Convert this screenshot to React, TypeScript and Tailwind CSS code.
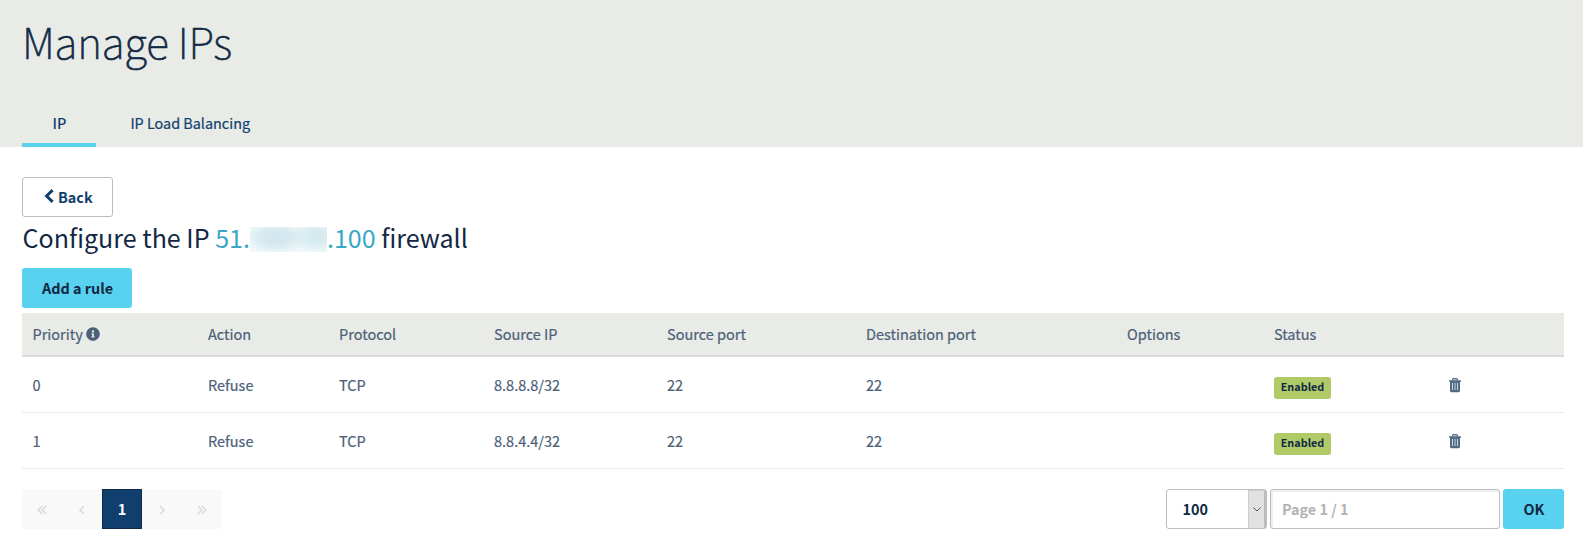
import { FaInfoCircle } from "react-icons/fa";

const columns = "grid grid-cols-[176px_131px_155px_173px_199px_261px_147px_175px_125px] items-center";

const headers = ["Action", "Protocol", "Source IP", "Source port", "Destination port", "Options", "Status"];

const rules = [
  { priority: 0, action: "Refuse", protocol: "TCP", source: "8.8.8.8/32", sourcePort: 22, destinationPort: 22 },
  { priority: 1, action: "Refuse", protocol: "TCP", source: "8.8.4.4/32", sourcePort: 22, destinationPort: 22 },
];

function Trash() {
  return (
    <svg className="mt-[2px] h-[15px] w-[12px]" viewBox="0 0 12 15" fill="none">
      <path d="M3.6 2.4V1.6Q3.6 .7 4.5 .7H7.5Q8.4 .7 8.4 1.6V2.4" stroke="#5f7389" strokeWidth="1.4" />
      <path d="M0 2.2H12V3.8H11V12.8Q11 14.2 9.8 14.2H2.2Q1 14.2 1 12.8V3.8H0Z" fill="#536b85" />
      <path d="M3.5 5V12M6 5V12M8.5 5V12" stroke="#c8d5e4" strokeWidth="1" />
    </svg>
  );
}

function Chevrons({ double = false, flip = false }: { double?: boolean; flip?: boolean }) {
  return (
    <span className="flex h-10 w-10 items-center justify-center pt-[2px]">
      <svg className={flip ? "h-[10px] w-[10px] -scale-x-100" : "h-[10px] w-[10px]"} viewBox="0 0 10 10" fill="none" stroke="#d9dadd" strokeWidth="1.6">
        {double ? <path d="M5.2 1L1.2 5L5.2 9M9.2 1L5.2 5L9.2 9" /> : <path d="M7 1L3 5L7 9" />}
      </svg>
    </span>
  );
}

export default function App() {
  return (
    <div className="h-[546px] overflow-hidden bg-white font-['Noto_Sans_CJK_SC','Noto_Sans_CJK_JP',sans-serif] text-[14.5px] leading-5 text-[#4d6079]">
      <header className="flex h-[147px] flex-col justify-between bg-[#e8ebe6] pl-[22px]">
        <h1 className="pt-[16px] text-[42.6px] leading-[50px] font-thin tracking-[-0.2px] text-[#122844] [-webkit-text-stroke:0.7px_#122844]">Manage IPs</h1>
        <nav className="flex h-[46px] text-[14.4px] text-[#113f6d]">
          <a className="h-full w-[74px] border-b-4 border-[#59d2ef] pt-[12px] pl-px text-center font-medium">IP</a>
          <a className="pt-[12px] pl-[34.4px] [-webkit-text-stroke:0.2px_#113f6d]">IP Load Balancing</a>
        </nav>
      </header>
      <main className="pt-[30px] pr-[19px] pl-[22px]">
        <button className="flex h-10 w-[91px] items-center rounded-[3px] border border-[#bbbdbf] pl-[21px] text-[14.4px] font-bold text-[#113f6d]">
          <svg className="-mt-[2px] h-[14px] w-[10px]" viewBox="0 0 10 14" fill="none" stroke="#113f6d" strokeWidth="3">
            <path d="M8.6 1.2L2.6 7L8.6 12.8" />
          </svg>
          <span className="pl-[4px]">Back</span>
        </button>
        <h2 className="flex h-[51px] items-center pb-[12px] pl-[0.5px] text-[25.05px] leading-[30px] text-[#122844]">
          <span className="whitespace-pre">Configure the IP </span>
          <span className="text-[#3ba7c6]">51.</span>
          <span className="mt-[5px] h-[25px] w-[77px] bg-[#f2f9fa] bg-[radial-gradient(ellipse_34px_17px_at_34%_42%,#cfe7ed_0,#d6eaf0_45%,transparent_100%),radial-gradient(ellipse_24px_18px_at_86%_38%,#cfe7ed_0,#d9ecf1_40%,transparent_100%)]" />
          <span className="text-[#3ba7c6]">.100</span>
          <span className="whitespace-pre"> firewall</span>
        </h2>
        <button className="mb-[5px] block h-10 w-[110px] rounded-[3px] bg-[#59d2ef] pl-px text-center text-[14.4px] font-bold text-[#122844]">Add a rule</button>
        <section className="[-webkit-text-stroke:0.2px_#4d6079]">
          <div className={`${columns} h-11 border-b-2 border-[#dadbda] bg-[#e8ebe6]`}>
            <span className="flex items-center gap-[3px] pl-[10.5px]">
              Priority
              <FaInfoCircle className="size-[14px]" />
            </span>
            {headers.map((h) => (
              <span key={h} className="pl-[10px]">{h}</span>
            ))}
          </div>
          {rules.map((r) => (
            <div key={r.priority} className={`${columns} h-14 border-b border-[#e8ebe6]`}>
              <span className="pl-[10.5px]">{r.priority}</span>
              <span className="pl-[10px]">{r.action}</span>
              <span className="pl-[10px]">{r.protocol}</span>
              <span className="pl-[10px]">{r.source}</span>
              <span className="pl-[10px]">{r.sourcePort}</span>
              <span className="pl-[10px]">{r.destinationPort}</span>
              <span />
              <span className="pt-[6px] pl-[10px]">
                <span className="block h-[22px] w-[57px] rounded-[3px] bg-[#b0ca67] text-center text-[10.8px] leading-[18px] font-bold text-[#122844] [-webkit-text-stroke:0]">Enabled</span>
              </span>
              <span className="pl-[10px]"><Trash /></span>
            </div>
          ))}
        </section>
        <footer className="flex justify-between pt-5">
          <div className="flex h-10 rounded-[3px] bg-[#f9f9f9]">
            <Chevrons double />
            <Chevrons />
            <span className="h-10 w-10 border border-[#122844] bg-[#113f6d] text-center leading-[38px] font-bold text-white">1</span>
            <Chevrons flip />
            <Chevrons double flip />
          </div>
          <div className="flex gap-[3px] text-[14.4px] font-bold">
            <div className="flex h-10 w-[101px] justify-between rounded-[3px] border border-[#bbbdbf] pl-[15.5px] leading-[38px] text-[#122844]">
              100
              <span className="flex w-[18px] items-center justify-center border-t border-r-2 border-l border-t-[#d0d0d0] border-r-[#bcbcbc] border-l-[#cfcfcf] bg-[#e1e1e1]">
                <svg className="h-[5px] w-[8px]" viewBox="0 0 8 5" fill="none" stroke="#555"><path d="M.5 .5L4 4L7.5 .5" /></svg>
              </span>
            </div>
            <div className="h-10 w-[230px] rounded-[3px] border border-[#bbbdbf] pl-[11px] leading-[38px] text-[#b3b3b3] shadow-[inset_2px_2px_1px_#eeeeee]">Page 1 / 1</div>
            <button className="h-10 w-[61px] rounded-[3px] bg-[#59d2ef] pl-px text-[#122844]">OK</button>
          </div>
        </footer>
      </main>
    </div>
  );
}
